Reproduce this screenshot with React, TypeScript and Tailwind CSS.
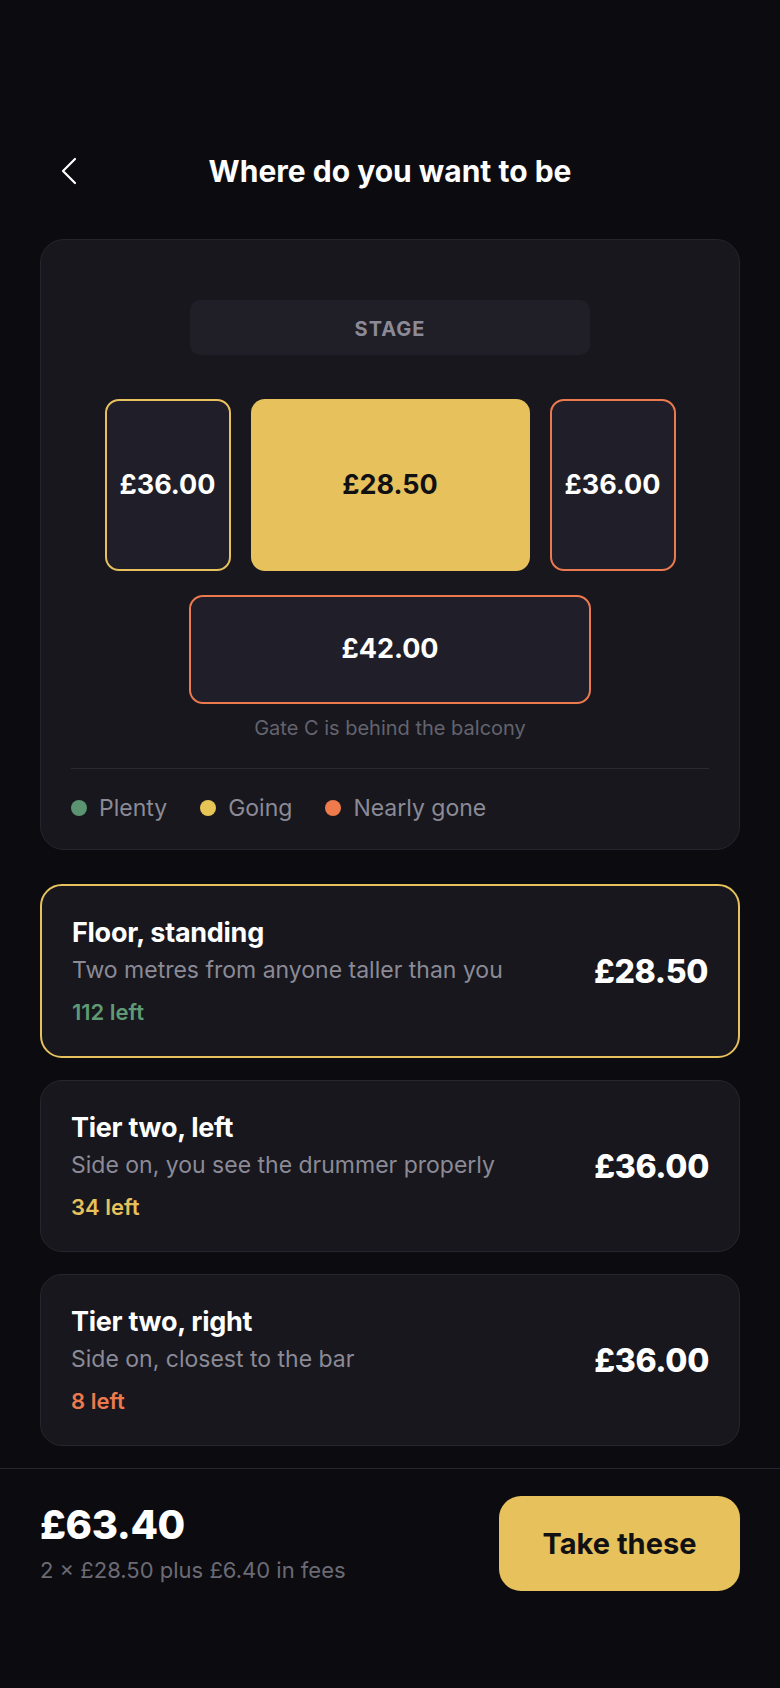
import React from "react";

type Tier = {
  name: string;
  note: string;
  left: string;
  price: string;
  tone: string;
  selected?: boolean;
};

const tiers: Tier[] = [
  {
    name: "Floor, standing",
    note: "Two metres from anyone taller than you",
    left: "112 left",
    price: "£28.50",
    tone: "text-[#5f9a74]",
    selected: true,
  },
  {
    name: "Tier two, left",
    note: "Side on, you see the drummer properly",
    left: "34 left",
    price: "£36.00",
    tone: "text-[#e7c15c]",
  },
  {
    name: "Tier two, right",
    note: "Side on, closest to the bar",
    left: "8 left",
    price: "£36.00",
    tone: "text-[#ec7a4f]",
  },
];

function BackIcon() {
  return (
    <svg width="18" height="28" viewBox="0 0 18 28" fill="none" className="shrink-0">
      <polyline
        points="15,2 3,14 15,26"
        stroke="#ffffff"
        strokeWidth="2.2"
        strokeLinecap="round"
        strokeLinejoin="round"
      />
    </svg>
  );
}

function SeatMap() {
  return (
    <div className="mt-9 rounded-[24px] border border-[#25252d] bg-[#17171d] px-[30px] pb-[25px] pt-[60px]">
      <div className="mx-auto flex h-[55px] w-[400px] items-center justify-center rounded-[10px] bg-[#201f28] pt-[3px] text-[20px] font-bold tracking-[0.05em] text-[#8b8a96]">
        STAGE
      </div>

      <div className="mt-[44px] flex justify-center gap-5">
        <div className="flex h-[172px] w-[126px] items-center justify-center rounded-[14px] border-[2.5px] border-[#e7c15c] bg-[#201f29] text-[27px] font-bold text-white">
          £36.00
        </div>
        <div className="flex h-[172px] w-[279px] items-center justify-center rounded-[14px] bg-[#e7c15c] text-[27px] font-bold text-[#111114]">
          £28.50
        </div>
        <div className="flex h-[172px] w-[126px] items-center justify-center rounded-[14px] border-[2.5px] border-[#ec7a4f] bg-[#201f29] text-[27px] font-bold text-white">
          £36.00
        </div>
      </div>

      <div className="mx-auto mt-6 flex h-[109px] w-[402px] items-center justify-center rounded-[14px] border-[2.5px] border-[#ec7a4f] bg-[#201f29] text-[27px] font-bold text-white">
        £42.00
      </div>

      <p className="mt-3 text-center text-[20px] leading-[24px] text-[#64636e]">
        Gate C is behind the balcony
      </p>

      <div className="mt-7 h-px bg-[#2a2a33]" />

      <div className="mt-[23px] flex items-center gap-[33px] text-[23px] leading-[32px] text-[#8b8a96]">
        <div className="flex items-center gap-3">
          <span className="h-4 w-4 rounded-full bg-[#5a9470]" />
          Plenty
        </div>
        <div className="flex items-center gap-3">
          <span className="h-4 w-4 rounded-full bg-[#e6c456]" />
          Going
        </div>
        <div className="flex items-center gap-3">
          <span className="h-4 w-4 rounded-full bg-[#ef7a4b]" />
          Nearly gone
        </div>
      </div>
    </div>
  );
}

function TierCard({ tier }: { tier: Tier }) {
  return (
    <div
      className={
        tier.selected
          ? "flex items-center justify-between rounded-[22px] border-2 border-[#e7c15c] bg-[#17171d] px-[30px] pb-[29px] pt-[30px]"
          : "flex items-center justify-between rounded-[22px] border border-[#26262e] bg-[#17171d] px-[30px] pb-[29px] pt-[30px]"
      }
    >
      <div>
        <div className="text-[27px] font-bold leading-[34px] tracking-[-0.01em] text-white">
          {tier.name}
        </div>
        <div className="mt-1 text-[23px] leading-[32px] text-[#8b8a96]">
          {tier.note}
        </div>
        <div className={"mt-[11px] text-[22px] font-semibold leading-[30px] " + tier.tone}>
          {tier.left}
        </div>
      </div>
      <div className="text-[32px] font-extrabold tracking-[-0.01em] text-white">
        {tier.price}
      </div>
    </div>
  );
}

export default function App() {
  return (
    <div className="flex min-h-[1688px] flex-col bg-[#0c0c10] font-['Inter',sans-serif] text-white">
      <div className="px-10">
        <div className="mt-[139px] grid h-16 grid-cols-[1fr_auto_1fr] items-center">
          <button className="flex items-center justify-start pl-5">
            <BackIcon />
          </button>
          <h1 className="text-[30px] font-bold text-white">
            Where do you want to be
          </h1>
          <div />
        </div>

        <SeatMap />

        <div className="mt-[34px] flex flex-col gap-[22px]">
          {tiers.map((t) => (
            <TierCard key={t.name} tier={t} />
          ))}
        </div>
      </div>

      <div className="mt-[22px] border-t border-[#26262e] px-10 pb-[97px] pt-[27px]">
        <div className="flex items-center justify-between">
          <div>
            <div className="text-[40px] font-extrabold leading-[44px] tracking-[-0.01em] text-white">
              £63.40
            </div>
            <div className="mt-[8px] text-[22px] leading-[30px] text-[#6b6a75]">
              2 × £28.50 plus £6.40 in fees
            </div>
          </div>
          <button className="flex h-[95px] w-[241px] items-center justify-center rounded-[22px] bg-[#e7c15c] text-[29px] font-bold text-[#111114]">
            Take these
          </button>
        </div>
      </div>
    </div>
  );
}
